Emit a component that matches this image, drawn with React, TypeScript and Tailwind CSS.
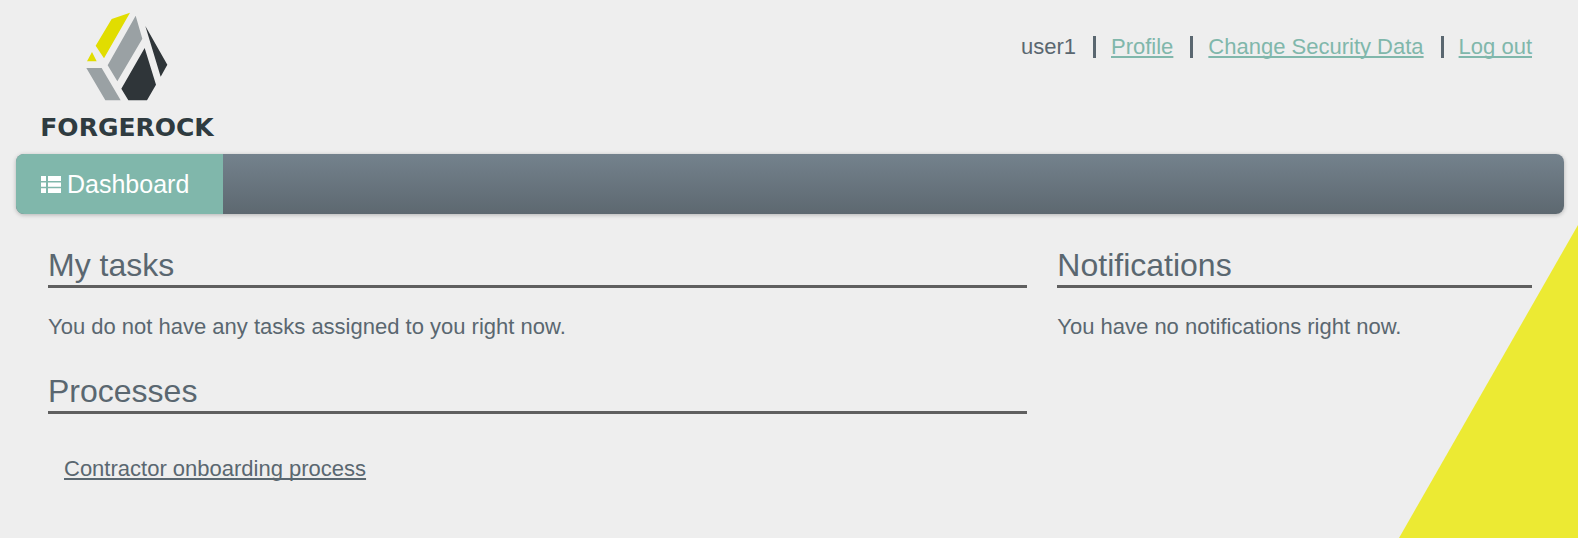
import type { ReactNode } from 'react';

const accountLinks = ['Profile', 'Change Security Data', 'Log out'];

function Emblem() {
  return (
    <svg viewBox="198 36 246 267" className="h-[89px] w-[82px]" aria-hidden="true">
      <path d="M275 57 330 38 252 175 227 137Z M216 156 230 184H201Z" fill="#e1dd00" />
      <path d="M347 47 367 116 292 244 263 196Z M199 204H245L302 301H256Z" fill="#9aa1a4" />
      <path d="M374 144 408 254 381 301H325L304 266Z M376 78 442 194 422 230Z" fill="#2f3539" />
    </svg>
  );
}

function ListIcon() {
  return (
    <svg viewBox="0 0 20 17" className="h-[17px] w-5" fill="currentColor" aria-hidden="true">
      <path d="M0 0h5v4.9H0z M7 0h13v4.9H7z M0 6.4h5v4.4H0z M7 6.4h13v4.4H7z M0 12.3h5V17H0z M7 12.3h13V17H7z" />
    </svg>
  );
}

function Section({ title, children }: { title: string; children: ReactNode }) {
  return (
    <section>
      <h2 className="border-b-[3px] border-[#5f5f5f] pb-0.5 text-[32px] leading-9">{title}</h2>
      {children}
    </section>
  );
}

export default function App() {
  return (
    <div className="relative isolate min-h-screen overflow-hidden bg-[#eeeeee] font-['Liberation_Sans',Arial,sans-serif] text-[22px] leading-[30px] text-[#5a6770]">
      <div className="absolute right-0 bottom-0 -z-10 h-[313px] w-[179px] bg-[#ecea33] [clip-path:polygon(100%_0,100%_100%,0_100%)]" />

      <header className="flex items-start justify-between pt-3 pr-[46px] pb-3 pl-8">
        <a href="#home" className="flex w-[190px] flex-col items-center gap-[13px] text-[#2f3b40]">
          <Emblem />
          <span className="font-['DejaVu_Sans',sans-serif] text-[25px] leading-7 font-bold">FORGEROCK</span>
        </a>
        <ul className="flex items-center pt-5">
          <li>user1</li>
          {accountLinks.map((label) => (
            <li key={label} className="flex items-center">
              <span className="mr-[15px] ml-[17px] h-[22px] w-[3px] bg-[#5a6770]" />
              <a href="#account" className="text-[#80b7ab] underline decoration-2 underline-offset-2 [text-decoration-skip-ink:none]">
                {label}
              </a>
            </li>
          ))}
        </ul>
      </header>

      <nav className="mr-3.5 ml-4 flex h-[60px] overflow-hidden rounded-lg bg-linear-to-b from-[#74828d] to-[#5d6870] shadow-[0_1px_4px_rgba(0,0,0,0.25)]">
        <a href="#dashboard" className="flex items-center gap-1.5 bg-[#80b7ab] pr-[34px] pl-[25px] text-[25px] text-white">
          <ListIcon />
          Dashboard
        </a>
      </nav>

      <main className="grid grid-cols-3 gap-[30px] pt-[33px] pr-[46px] pl-12">
        <div className="col-span-2 flex flex-col gap-[31px]">
          <Section title="My tasks">
            <p className="pt-6">You do not have any tasks assigned to you right now.</p>
          </Section>
          <Section title="Processes">
            <ul className="pt-10 pl-4">
              <li>
                <a href="#process" className="underline decoration-2 underline-offset-2 [text-decoration-skip-ink:none]">
                  Contractor onboarding process
                </a>
              </li>
            </ul>
          </Section>
        </div>
        <Section title="Notifications">
          <p className="pt-6">You have no notifications right now.</p>
        </Section>
      </main>
    </div>
  );
}
